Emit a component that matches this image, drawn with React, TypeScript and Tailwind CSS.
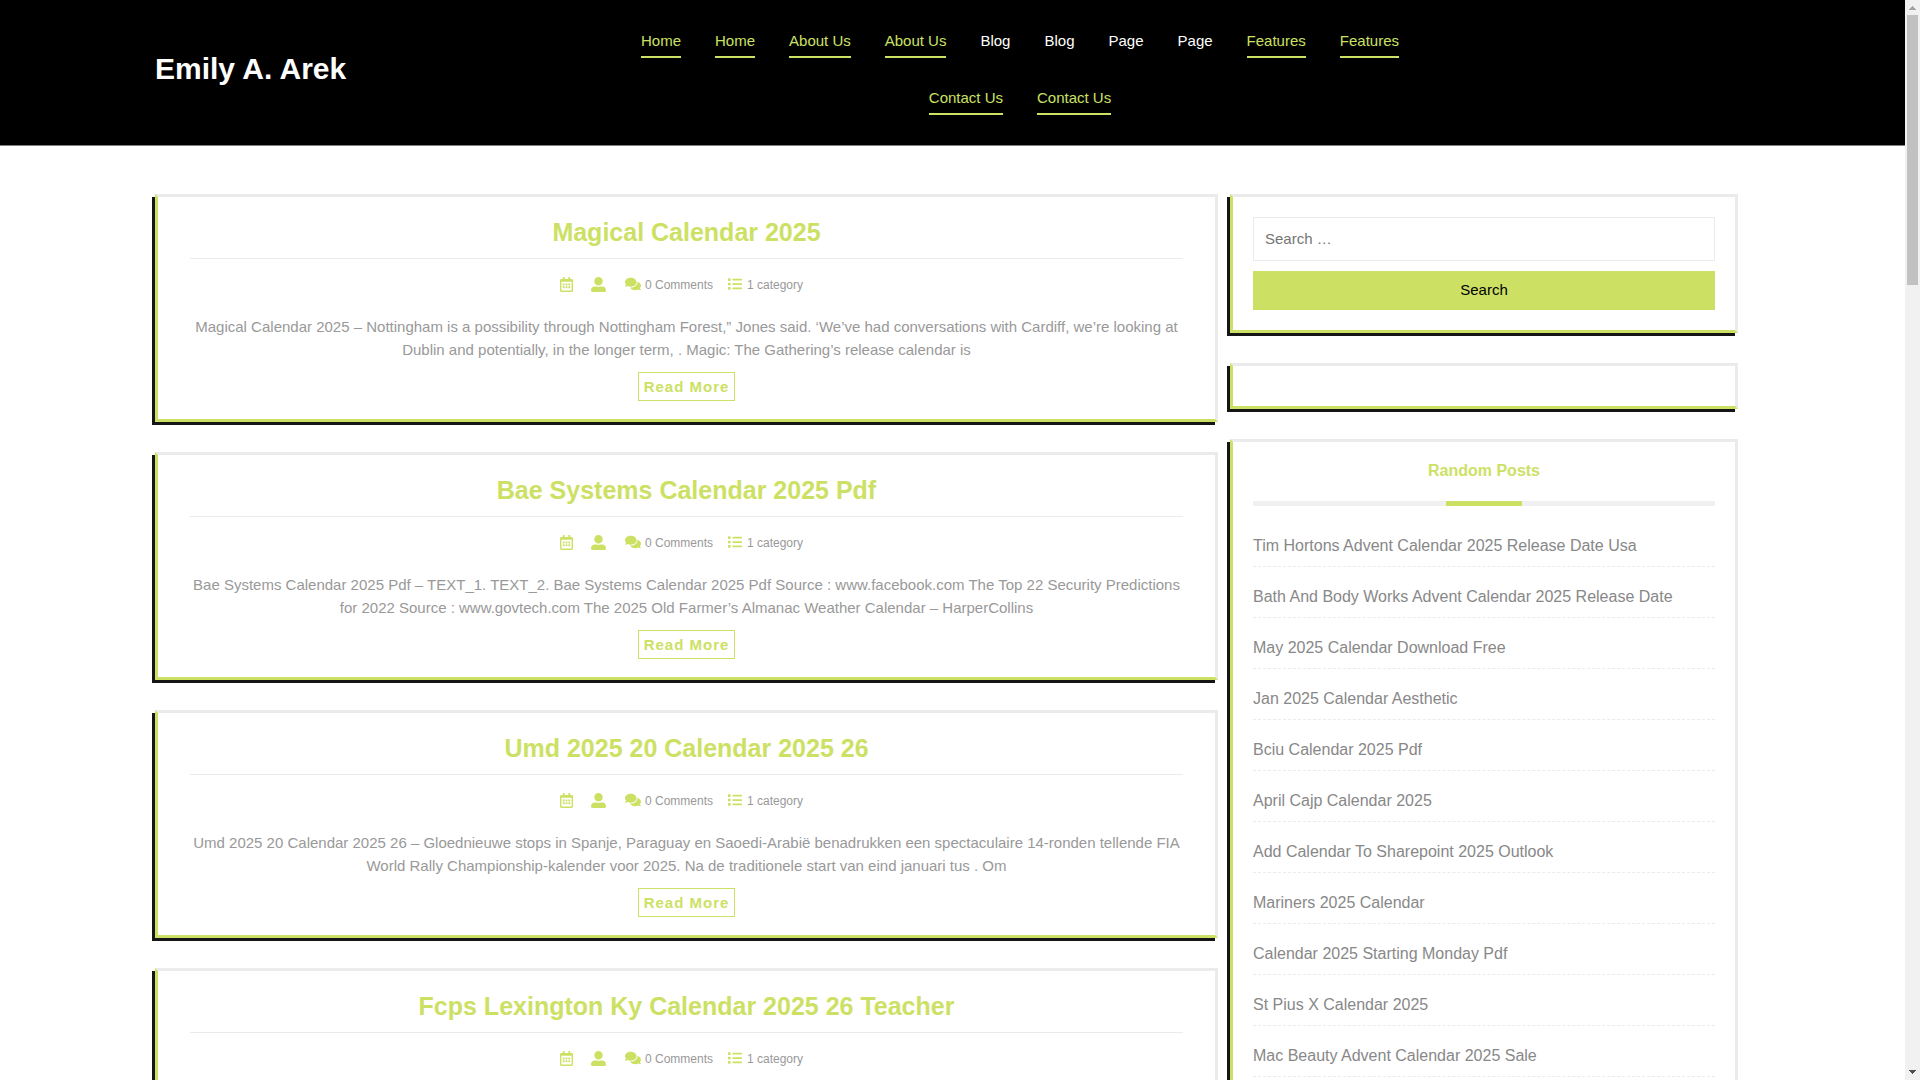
import { FaComments, FaList, FaRegCalendarAlt, FaUserAlt } from 'react-icons/fa';

interface Post {
  title: string;
  excerpt?: string;
}

interface NavItem {
  label: string;
  active: boolean;
}

const NAV_ITEMS: NavItem[] = [
  { label: 'Home', active: true },
  { label: 'Home', active: true },
  { label: 'About Us', active: true },
  { label: 'About Us', active: true },
  { label: 'Blog', active: false },
  { label: 'Blog', active: false },
  { label: 'Page', active: false },
  { label: 'Page', active: false },
  { label: 'Features', active: true },
  { label: 'Features', active: true },
  { label: 'Contact Us', active: true },
  { label: 'Contact Us', active: true },
];

const POSTS: Post[] = [
  {
    title: 'Magical Calendar 2025',
    excerpt:
      'Magical Calendar 2025 – Nottingham is a possibility through Nottingham Forest,” Jones said. ‘We’ve had conversations with Cardiff, we’re looking at Dublin and potentially, in the longer term, . Magic: The Gathering’s release calendar is',
  },
  {
    title: 'Bae Systems Calendar 2025 Pdf',
    excerpt:
      'Bae Systems Calendar 2025 Pdf – TEXT_1. TEXT_2. Bae Systems Calendar 2025 Pdf Source : www.facebook.com The Top 22 Security Predictions for 2022 Source : www.govtech.com The 2025 Old Farmer’s Almanac Weather Calendar – HarperCollins',
  },
  {
    title: 'Umd 2025 20 Calendar 2025 26',
    excerpt:
      'Umd 2025 20 Calendar 2025 26 – Gloednieuwe stops in Spanje, Paraguay en Saoedi-Arabië benadrukken een spectaculaire 14-ronden tellende FIA World Rally Championship-kalender voor 2025. Na de traditionele start van eind januari tus . Om',
  },
  {
    title: 'Fcps Lexington Ky Calendar 2025 26 Teacher',
  },
];

const RANDOM_POSTS = [
  'Tim Hortons Advent Calendar 2025 Release Date Usa',
  'Bath And Body Works Advent Calendar 2025 Release Date',
  'May 2025 Calendar Download Free',
  'Jan 2025 Calendar Aesthetic',
  'Bciu Calendar 2025 Pdf',
  'April Cajp Calendar 2025',
  'Add Calendar To Sharepoint 2025 Outlook',
  'Mariners 2025 Calendar',
  'Calendar 2025 Starting Monday Pdf',
  'St Pius X Calendar 2025',
  'Mac Beauty Advent Calendar 2025 Sale',
];

const CARD =
  'border-3 border-t-[#ebebeb] border-r-[#ebebeb] border-b-[#cce164] border-l-[#cce164] shadow-[-3px_3px_0_#151515]';

function Header() {
  return (
    <header className="grid grid-cols-[463fr_804fr_316fr] items-center bg-black border-b border-[#808080] pt-4 pb-[15px] pl-[155px] pr-[167px]">
      <a href="#" className="text-[30px] leading-9 font-bold text-white pb-2">
        Emily A. Arek
      </a>
      <nav>
        <ul className="flex flex-wrap justify-center gap-x-[34px]">
          {NAV_ITEMS.map((item, i) => (
            <li key={i} className="h-[57px] pt-[14px]">
              <a
                href="#"
                className={`block pb-1 text-[15px] leading-[22px] border-b-2 ${
                  item.active ? 'text-[#cce164] border-[#cce164]' : 'text-white border-transparent'
                }`}
              >
                {item.label}
              </a>
            </li>
          ))}
        </ul>
      </nav>
    </header>
  );
}

function PostCard({ post }: { post: Post }) {
  return (
    <article className={`${CARD} min-h-[228px] px-8 pt-[18px] pb-4 text-center`}>
      <h2 className="border-b border-[#ebebeb] pb-2 text-[25px] leading-[35px] font-bold text-[#cce164]">
        <a href="#">{post.title}</a>
      </h2>
      <div className="flex items-center justify-center h-[52px] mb-1 pr-[10px] text-xs text-[#999999]">
        <FaRegCalendarAlt className="w-[13px] h-[15px] mb-0.5 mr-[18px] text-[#cce164]" />
        <FaUserAlt className="size-[15px] mb-0.5 mr-[19px] text-[#cce164]" />
        <FaComments className="size-4 mb-0.5 mr-1 text-[#cce164]" />
        <a href="#" className="mr-[15px]">0 Comments</a>
        <FaList className="size-[14px] mb-0.5 mr-[5px] text-[#cce164]" />
        <span>1 category</span>
      </div>
      {post.excerpt && (
        <>
          <p className="mb-[11px] text-[15px] leading-[23px] text-[#999999]">{post.excerpt}</p>
          <a
            href="#"
            className="inline-block border border-[#cce164] px-[5px] text-[15px] leading-[27px] font-bold tracking-[1px] text-[#cce164]"
          >
            Read More
          </a>
        </>
      )}
    </article>
  );
}

function Sidebar() {
  return (
    <aside className="flex flex-col gap-[30px]">
      <section className={`${CARD} p-5`}>
        <form role="search" className="flex flex-col gap-[10px]" onSubmit={(e) => e.preventDefault()}>
          <input
            type="search"
            aria-label="Search for:"
            placeholder="Search …"
            className="h-11 w-full border border-[#ebebeb] px-[11px] pb-0.5 text-[15px] text-[#757575] placeholder:text-[#757575] outline-none"
          />
          <button type="submit" className="h-[39px] w-full bg-[#cce164] text-[15px] text-black">
            Search
          </button>
        </form>
      </section>

      <section className={`${CARD} p-5`} />

      <section className={`${CARD} p-5`}>
        <h3 className="pb-[21px] text-center text-base leading-[18px] font-bold text-[#cce164]">
          Random Posts
        </h3>
        <div className="flex justify-center h-[5px] mb-[10px] bg-[#f0f0f0]">
          <div className="w-1/6 bg-[#cce164]" />
        </div>
        <ul>
          {RANDOM_POSTS.map((title) => (
            <li
              key={title}
              className="border-b border-dashed border-[#ebebeb] pt-[18px] pb-2 text-base leading-6 text-[#888888]"
            >
              <a href="#">{title}</a>
            </li>
          ))}
        </ul>
      </section>
    </aside>
  );
}

function Scrollbar() {
  return (
    <div className="flex flex-col items-center w-[15px] shrink-0 bg-[#f1f1f1]" aria-hidden="true">
      <svg className="h-[15px] w-[7px]" viewBox="0 0 7 15">
        <path d="M3 6h1v1h1v1h1v1h1v1H0V9h1V8h1V7h1z" fill="#a3a3a3" />
      </svg>
      <div className="w-[11px] h-1/4 bg-[#c1c1c1]" />
      <svg className="h-[15px] w-[7px] mt-auto" viewBox="0 0 7 15">
        <path d="M0 5h7v1H6v1H5v1H4v1H3V8H2V7H1V6H0z" fill="#505050" />
      </svg>
    </div>
  );
}

export default function App() {
  return (
    <div className="flex h-screen overflow-hidden bg-white font-['Liberation_Sans',Arial,sans-serif]">
      <div className="flex-1 min-w-0 overflow-hidden">
        <Header />
        <main className="grid grid-cols-[1063fr_508fr] items-start gap-3 pt-12 pl-[155px] pr-[167px]">
          <div className="flex flex-col gap-[30px]">
            {POSTS.map((post) => (
              <PostCard key={post.title} post={post} />
            ))}
          </div>
          <Sidebar />
        </main>
      </div>
      <Scrollbar />
    </div>
  );
}
